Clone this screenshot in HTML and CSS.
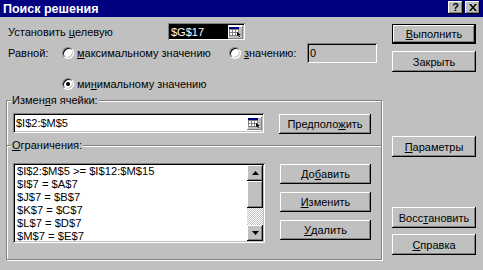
FILE: index.html
```html
<!DOCTYPE html>
<html lang="ru">
<head>
<meta charset="utf-8">
<title>Поиск решения</title>
<link rel="stylesheet" href="styles.css">
</head>
<body>
<div class="window">
  <div class="titlebar">
    <span class="title">Поиск решения</span>
    <div class="caption-btns">
      <span class="cbtn help">?</span>
      <span class="cbtn close"><svg width="8" height="7" viewBox="0 0 8 7"><path d="M0 0h2l2 2.5L6 0h2L5 3.5 8 7H6L4 4.5 2 7H0l3-3.5z" fill="#000"/></svg></span>
    </div>
  </div>
  <div class="body">
    <div class="left">
      <div class="row1">
        <span class="lbl1">Установить <u>ц</u>елевую</span>
        <div class="field target">
          <span class="sel">$G$17</span>
          <span class="refbtn"><svg width="13" height="10" viewBox="0 0 13 10"><rect x="0" y="0" width="10" height="2" fill="#000080"/><rect x="0.5" y="2.5" width="9" height="6" fill="#fff" stroke="#808080"/><path d="M0 5.5h10M3.5 2v7M6.5 2v7" stroke="#808080"/><path d="M8 5l4 3-2 0 1 2-1 0-1-2-1 1z" fill="#000"/></svg></span>
        </div>
      </div>
      <div class="opts">
        <span class="eq">Равной:</span>
        <span class="opt"><span class="radio"></span><span><u>м</u>аксимальному значению</span></span>
        <span class="opt"><span class="radio"></span><span><u>з</u>начению:</span></span>
        <div class="field valuefield">0</div>
        <span></span>
        <span class="opt"><span class="radio on"></span><span>ми<u>н</u>имальному значению</span></span>
      </div>
      <div class="group g1">
        <span class="glabel">Измен<u>я</u>я ячейки:</span>
        <div class="grow">
          <div class="field cells">
            <span class="ftext">$I$2:$M$5</span>
            <span class="refbtn"><svg width="13" height="10" viewBox="0 0 13 10"><rect x="0" y="0" width="10" height="2" fill="#000080"/><rect x="0.5" y="2.5" width="9" height="6" fill="#fff" stroke="#808080"/><path d="M0 5.5h10M3.5 2v7M6.5 2v7" stroke="#808080"/><path d="M8 5l4 3-2 0 1 2-1 0-1-2-1 1z" fill="#000"/></svg></span>
          </div>
          <span class="btn guess">Предполо<u>ж</u>ить</span>
        </div>
      </div>
      <div class="group g2">
        <span class="glabel"><u>О</u>граничения:</span>
        <div class="grow">
          <div class="listbox">
            <div class="items">
              <div>$I$2:$M$5 &gt;= $I$12:$M$15</div>
              <div>$I$7 = $A$7</div>
              <div>$J$7 = $B$7</div>
              <div>$K$7 = $C$7</div>
              <div>$L$7 = $D$7</div>
              <div>$M$7 = $E$7</div>
            </div>
            <div class="scrollbar">
              <span class="sbtn"><svg width="7" height="4" viewBox="0 0 7 4"><path d="M3.5 0L7 4H0z" fill="#000"/></svg></span>
              <span class="thumb"></span>
              <span class="track"></span>
              <span class="sbtn"><svg width="7" height="4" viewBox="0 0 7 4"><path d="M0 0h7L3.5 4z" fill="#000"/></svg></span>
            </div>
          </div>
          <div class="cbtns">
            <span class="btn">До<u>б</u>авить</span>
            <span class="btn"><u>И</u>зменить</span>
            <span class="btn"><u>У</u>далить</span>
          </div>
        </div>
      </div>
    </div>
    <div class="right">
      <span class="btn default b1"><u>В</u>ыполнить</span>
      <span class="btn b2">Закрыть</span>
      <span class="btn b3"><u>П</u>араметры</span>
      <span class="btn b4">Восс<u>т</u>ановить</span>
      <span class="btn b5"><u>С</u>правка</span>
    </div>
  </div>
</div>
</body>
</html>
```
FILE: styles.css
```css
html, body {
  margin: 0;
  padding: 0;
  background: #c0c0c0;
}
.window {
  width: 483px;
  height: 270px;
  overflow: hidden;
  font-family: "Liberation Sans", Arial, sans-serif;
  font-size: 11px;
  color: #000;
  background: #c0c0c0;
}
u { text-decoration: underline; text-underline-offset: 1px; }
.titlebar {
  height: 17px;
  background: #000080;
  color: #fff;
  display: flex;
  align-items: center;
  justify-content: space-between;
  padding: 0 3px 0 3px;
}
.title {
  font-weight: bold;
  font-size: 12.5px;
}
.caption-btns {
  display: flex;
  gap: 2px;
  margin-top: -2px;
}
.cbtn {
  width: 15px;
  height: 13px;
  box-sizing: border-box;
  background: #c0c0c0;
  color: #000;
  display: flex;
  align-items: center;
  justify-content: center;
  box-shadow: inset -1px -1px #000, inset 1px 1px #fff, inset -2px -2px #808080;
  font-weight: bold;
  font-size: 11px;
  line-height: 1;
}
.body {
  display: flex;
}
.left {
  width: 384px;
}
.right {
  width: 84px;
  margin-left: 8px;
  display: flex;
  flex-direction: column;
}
.btn {
  display: flex;
  align-items: center;
  justify-content: center;
  box-sizing: border-box;
  height: 21px;
  background: #c0c0c0;
  box-shadow: inset -1px -1px #000, inset 1px 1px #fff, inset -2px -2px #808080;
  white-space: nowrap;
}
.btn.default {
  border: 1px solid #000;
  height: 20px;
}
.b1 { margin-top: 7px; }
.b2 { margin-top: 7px; }
.b3 { margin-top: 64px; }
.b4 { margin-top: 50px; }
.b5 { margin-top: 6px; }

.field {
  box-sizing: border-box;
  background: #fff;
  box-shadow: inset 1px 1px #808080, inset -1px -1px #fff, inset 2px 2px #000, inset -2px -2px #c0c0c0;
  padding: 2px;
  display: flex;
  align-items: center;
}
.row1 {
  display: flex;
  align-items: center;
  margin-top: 6px;
  padding-left: 8px;
  height: 17px;
}
.lbl1 { width: 160px; }
.target {
  width: 77px;
  height: 17px;
  padding: 2px 2px 1px 2px;
  align-items: stretch;
}
.sel {
  flex: 1;
  background: #000;
  color: #fff;
  display: flex;
  align-items: center;
  padding-left: 1px;
}
.refbtn {
  width: 15px;
  height: 13px;
  box-sizing: border-box;
  background: #c0c0c0;
  box-shadow: inset -1px -1px #808080, inset 1px 1px #fff;
  display: flex;
  align-items: center;
  justify-content: center;
  align-self: center;
}
.opts {
  display: grid;
  grid-template-columns: 54px 167px 78px 70px;
  grid-template-rows: 20px 13px;
  row-gap: 14px;
  align-items: center;
  padding-left: 8px;
  margin-top: 3px;
}
.opt {
  display: flex;
  align-items: center;
  gap: 3px;
}
.radio {
  width: 12px;
  height: 12px;
  box-sizing: border-box;
  border-radius: 50%;
  background: #fff;
  border: 1px solid;
  border-color: #808080 #fff #fff #808080;
  box-shadow: inset 1px 1px #000, inset -1px -1px #c0c0c0;
  position: relative;
  flex: none;
}
.radio.on::after {
  content: "";
  position: absolute;
  left: 3px;
  top: 3px;
  width: 4px;
  height: 4px;
  border-radius: 50%;
  background: #000;
}
.valuefield {
  width: 70px;
  height: 20px;
  background: #c0c0c0;
  padding-left: 3px;
}
.group {
  position: relative;
  box-sizing: border-box;
  margin-left: 6px;
  width: 376px;
  border: 1px solid #808080;
  box-shadow: inset 1px 1px #fff, 1px 1px #fff;
  padding-left: 6px;
}
.glabel {
  position: absolute;
  top: -7px;
  left: 4px;
  background: #c0c0c0;
  padding: 0 1px;
  line-height: 13px;
}
.g1 {
  margin-top: 10px;
  height: 45px;
  border-bottom: none;
  padding-top: 12px;
}
.g2 {
  height: 115px;
  padding-top: 17px;
}
.grow {
  display: flex;
  align-items: flex-start;
}
.cells {
  width: 251px;
  height: 20px;
  padding-left: 3px;
}
.ftext { flex: 1; }
.guess {
  margin-left: 15px;
  margin-top: 1px;
  width: 92px;
  height: 20px;
}
.listbox {
  width: 252px;
  height: 80px;
  box-sizing: border-box;
  background: #fff;
  box-shadow: inset 1px 1px #808080, inset -1px -1px #fff, inset 2px 2px #000, inset -2px -2px #c0c0c0;
  padding: 2px;
  display: flex;
}
.items {
  flex: 1;
  padding-left: 2px;
  line-height: 13px;
  font-size: 11.2px;
  white-space: nowrap;
  overflow: hidden;
}
.scrollbar {
  width: 16px;
  display: flex;
  flex-direction: column;
}
.sbtn, .thumb {
  box-sizing: border-box;
  background: #c0c0c0;
  box-shadow: inset -1px -1px #000, inset 1px 1px #fff, inset -2px -2px #808080;
  display: flex;
  align-items: center;
  justify-content: center;
}
.sbtn { height: 16px; }
.thumb { height: 27px; }
.track {
  flex: 1;
  background: repeating-conic-gradient(#fff 0 25%, #c0c0c0 0 50%) 0 0 / 2px 2px;
}
.cbtns {
  margin-left: 15px;
  margin-top: 1px;
  width: 91px;
  display: flex;
  flex-direction: column;
  gap: 8px;
}
.cbtns .btn { height: 20px; }
```
